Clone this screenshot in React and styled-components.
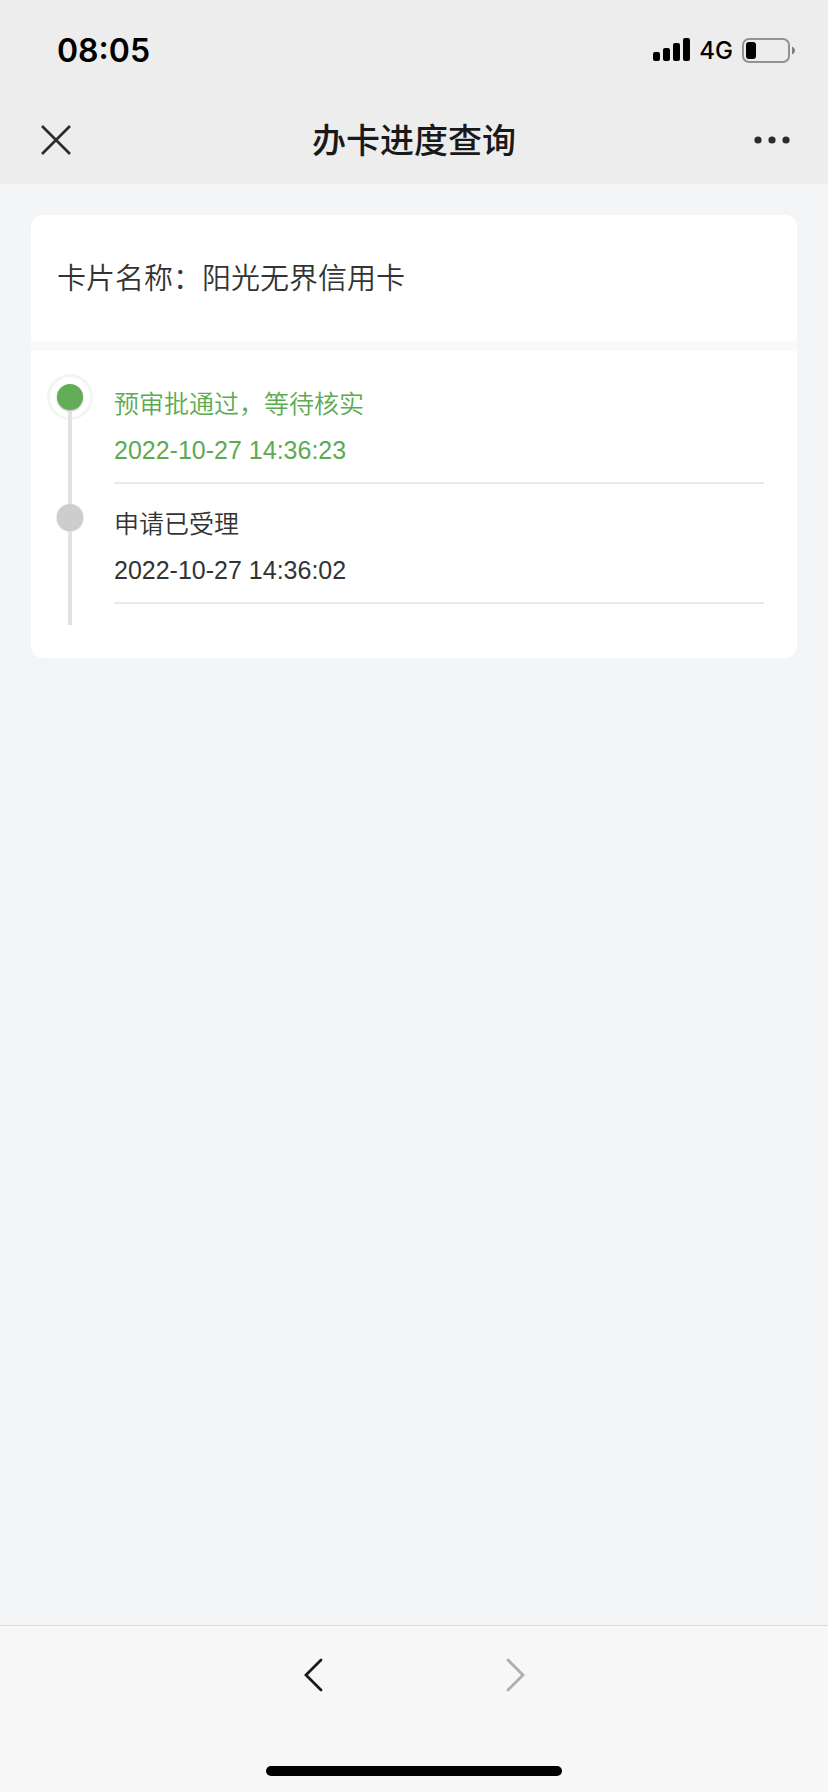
import styled, { createGlobalStyle } from "styled-components";

const GlobalStyle = createGlobalStyle`
  * {
    box-sizing: border-box;
  }
  body {
    margin: 0;
    background-color: #f4f5f7;
    font-family: "Liberation Sans", "Noto Sans CJK SC", sans-serif;
  }
`;

const Page = styled.div`
  min-height: 100vh;
  display: flex;
  flex-direction: column;
`;
const Header = styled.header`
  background-color: #ededed;
`;
const StatusBar = styled.div`
  height: 96px;
  padding: 4px 33px 0 57px;
  display: flex;
  align-items: center;
  justify-content: space-between;
  font-family: "Inter", sans-serif;
  color: #000;
`;
const Time = styled.span`
  font-size: 32px;
  font-weight: 600;
`;
const StatusIcons = styled.div`
  display: flex;
  align-items: center;
  gap: 9px;
`;
const Network = styled.span`
  font-size: 24px;
  font-weight: 500;
`;
const NavBar = styled.div`
  height: 88px;
  padding: 0 32px;
  display: grid;
  grid-template-columns: 48px 1fr 48px;
  align-items: center;
`;
const Title = styled.h1`
  margin: 0;
  padding-top: 2px;
  font-size: 34px;
  font-weight: 500;
  line-height: 48px;
  text-align: center;
  color: #191919;
`;
const IconButton = styled.button`
  width: 48px;
  height: 48px;
  padding: 0;
  border: none;
  background: none;
  display: flex;
  align-items: center;
  justify-content: center;
  color: ${(props) => props.$color || "#2b2b2b"};
  cursor: pointer;
  &:disabled {
    cursor: default;
  }
`;
const Main = styled.main`
  flex: 1;
  padding: 31px;
`;
const Card = styled.section`
  background-color: #fff;
  border-radius: 12px;
  overflow: hidden;
`;
const CardName = styled.h2`
  margin: 0;
  padding: 44px 26px 42px;
  border-bottom: 10px solid #f9f9f9;
  font-size: 29px;
  font-weight: 350;
  line-height: 40px;
  color: #333;
`;
const Timeline = styled.ol`
  margin: 0;
  padding: 23px 33px 33px 16px;
  list-style: none;
`;
const Step = styled.li`
  display: flex;
  gap: 21px;
  color: ${(props) => (props.$active ? "#5dab51" : "#333")};
`;
const Track = styled.div`
  width: 46px;
  display: flex;
  flex-direction: column;
  align-items: center;
`;
const Marker = styled.div`
  width: 46px;
  height: 46px;
  flex: none;
  border: 3px solid ${(props) => (props.$active ? "#eff7ee" : "transparent")};
  border-radius: 50%;
  display: flex;
  align-items: center;
  justify-content: center;
`;
const Dot = styled.div`
  width: 26px;
  height: 26px;
  border-radius: 50%;
  background-color: ${(props) => (props.$active ? "#64ad58" : "#cdcdcd")};
  box-shadow: 0 1px 2px rgba(0, 0, 0, 0.3);
`;
/* runs under the markers on both ends */
const Line = styled.div`
  width: 4px;
  flex: 1;
  margin: -9px 0 ${(props) => (props.$last ? "0" : "-10px")};
  background-color: #e1e1e1;
`;
const StepBody = styled.div`
  flex: 1;
  height: 110px;
  margin-bottom: ${(props) => (props.$last ? "21px" : "10px")};
  padding-top: 12px;
  border-bottom: 2px solid #e9e9e9;
`;
const StepTitle = styled.p`
  margin: 0 0 10px;
  font-size: 25px;
  font-weight: 350;
  line-height: 36px;
`;
const StepTime = styled.time`
  display: block;
  font-size: 25px;
  line-height: 36px;
`;
const Footer = styled.footer`
  padding-bottom: 16px;
  border-top: 1px solid #dcdcdc;
  background-color: #f7f7f7;
  display: flex;
  flex-direction: column;
  align-items: center;
  gap: 67px;
`;
const Toolbar = styled.nav`
  padding-top: 25px;
  display: flex;
  gap: 155px;
`;
const HomeIndicator = styled.div`
  width: 296px;
  height: 10px;
  border-radius: 5px;
  background-color: #000;
`;

const steps = [
  { title: "预审批通过，等待核实", time: "2022-10-27 14:36:23" },
  { title: "申请已受理", time: "2022-10-27 14:36:02" },
];

const Signal = () => (
  <svg width="37" height="24" viewBox="0 0 37 24" fill="currentColor">
    <rect x="0" y="14" width="7" height="9" rx="2" />
    <rect x="10" y="10" width="7" height="13" rx="2" />
    <rect x="20" y="5" width="7" height="18" rx="2" />
    <rect x="30" y="0" width="7" height="23" rx="2" />
  </svg>
);

const Battery = () => (
  <svg width="53" height="25" viewBox="0 0 53 25">
    <rect
      x="1"
      y="1"
      width="46"
      height="23"
      rx="6"
      fill="none"
      stroke="#929292"
      strokeWidth="2"
    />
    <rect x="4" y="4" width="10" height="17" rx="3" fill="currentColor" />
    <path d="M50 8.5C54 10 54 15 50 16.5Z" fill="#808080" />
  </svg>
);

const App = () => {
  return (
    <Page>
      <GlobalStyle />
      <Header>
        <StatusBar>
          <Time>08:05</Time>
          <StatusIcons>
            <Signal />
            <Network>4G</Network>
            <Battery />
          </StatusIcons>
        </StatusBar>
        <NavBar>
          <IconButton aria-label="关闭">
            <svg width="30" height="30" viewBox="0 0 30 30">
              <path
                d="M1 1L29 29M29 1L1 29"
                stroke="currentColor"
                strokeWidth="2.6"
              />
            </svg>
          </IconButton>
          <Title>办卡进度查询</Title>
          <IconButton aria-label="更多">
            <svg width="36" height="8" viewBox="0 0 36 8" fill="currentColor">
              <circle cx="4" cy="4" r="3.6" />
              <circle cx="18" cy="4" r="3.6" />
              <circle cx="32" cy="4" r="3.6" />
            </svg>
          </IconButton>
        </NavBar>
      </Header>
      <Main>
        <Card>
          <CardName>卡片名称：阳光无界信用卡</CardName>
          <Timeline>
            {steps.map((step, i) => {
              const active = i === 0;
              const last = i === steps.length - 1;
              return (
                <Step key={step.time} $active={active}>
                  <Track>
                    <Marker $active={active}>
                      <Dot $active={active} />
                    </Marker>
                    <Line $last={last} />
                  </Track>
                  <StepBody $last={last}>
                    <StepTitle>{step.title}</StepTitle>
                    <StepTime>{step.time}</StepTime>
                  </StepBody>
                </Step>
              );
            })}
          </Timeline>
        </Card>
      </Main>
      <Footer>
        <Toolbar>
          <IconButton aria-label="后退" $color="#191919">
            <svg width="20" height="34" viewBox="0 0 20 34" fill="none">
              <path
                d="M18 2L3 17L18 32"
                stroke="currentColor"
                strokeWidth="2.8"
                strokeLinecap="round"
              />
            </svg>
          </IconButton>
          <IconButton aria-label="前进" $color="#aeaeae" disabled>
            <svg width="20" height="34" viewBox="0 0 20 34" fill="none">
              <path
                d="M2 2L17 17L2 32"
                stroke="currentColor"
                strokeWidth="2.8"
                strokeLinecap="round"
              />
            </svg>
          </IconButton>
        </Toolbar>
        <HomeIndicator />
      </Footer>
    </Page>
  );
};

export default App;
